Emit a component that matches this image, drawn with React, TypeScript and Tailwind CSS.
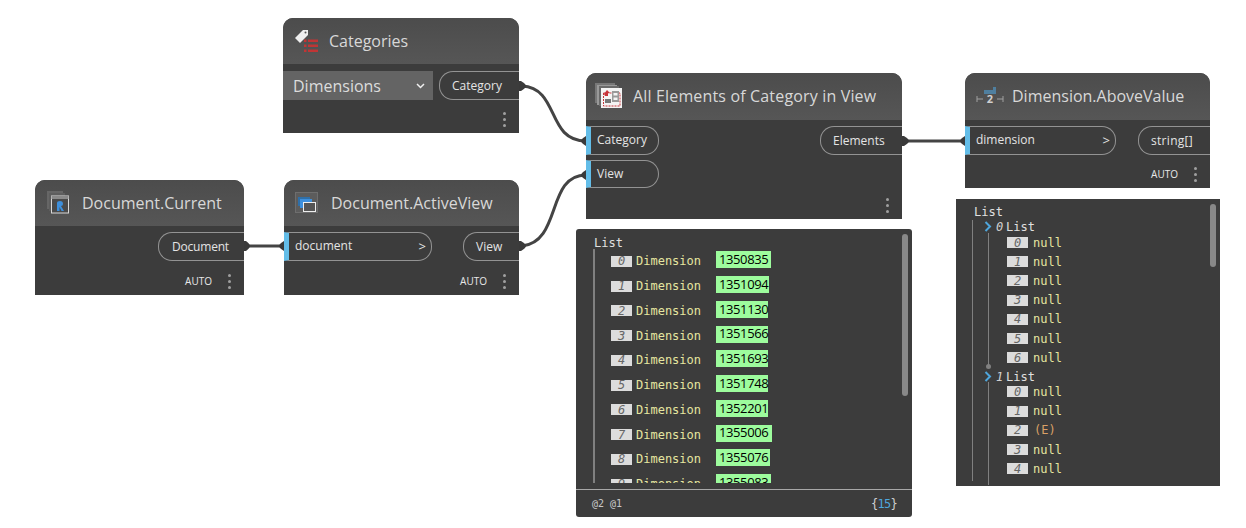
import React from 'react';

const SANS = "font-['Open_Sans',sans-serif]";
const MONO = "font-['DejaVu_Sans_Mono',monospace]";

const Dots = () => (
  <div className="flex flex-col gap-[3px] w-[3px]">
    <span className="w-[3px] h-[3px] rounded-full bg-[#a0a0a0]" />
    <span className="w-[3px] h-[3px] rounded-full bg-[#a0a0a0]" />
    <span className="w-[3px] h-[3px] rounded-full bg-[#a0a0a0]" />
  </div>
);

const Footer = ({ auto }: { auto?: boolean }) => (
  <div className="mt-auto flex items-center justify-end h-[27px] pr-[13px] gap-[16px]">
    {auto && <span className={`${SANS} text-[10px] font-medium text-[#e8e8e8]`}>AUTO</span>}
    <Dots />
  </div>
);

const Header = ({ icon, title, className }: { icon: React.ReactNode; title: string; className: string }) => (
  <div className={`flex items-center bg-gradient-to-b from-[#4c4c4c] to-[#565656] rounded-t-[10px] ${className}`}>
    {icon}
    <span className={`${SANS} text-[16px] text-[#d8d8d8] whitespace-nowrap`}>{title}</span>
  </div>
);

const Output = ({ label, className }: { label: string; className: string }) => (
  <div className={`flex items-center h-[29px] border border-r-0 border-[#939393] rounded-l-[14px] ${className}`}>
    <span className={`${SANS} text-[12px] text-[#e4e4e4]`}>{label}</span>
  </div>
);

const Input = ({ label, arrow, className }: { label: string; arrow?: boolean; className: string }) => (
  <div className={`flex items-center justify-between border border-l-0 border-[#939393] rounded-r-[14px] border-l-[5px] border-l-[#63bde8] pl-[6px] pr-[5px] ${className}`}>
    <span className={`${SANS} text-[12px] text-[#e4e4e4] -mt-[1px]`}>{label}</span>
    {arrow && <span className={`${SANS} text-[13px] text-[#e4e4e4]`}>&gt;</span>}
  </div>
);

const CategoriesIcon = () => (
  <svg width="26" height="24" viewBox="0 0 26 24" className="ml-[11px] mr-[9px]">
    <path d="M1 9 L9 1 L14 1 L14 6 L6 14 Z" fill="#eeeeee" />
    <circle cx="11.5" cy="3.5" r="1" fill="#555" />
    <g fill="#c03535">
      <rect x="10" y="10.5" width="2.5" height="2.5" />
      <rect x="10" y="15.5" width="2.5" height="2.5" />
      <rect x="10" y="20.5" width="2.5" height="2.5" />
      <rect x="14" y="10.5" width="10" height="2.5" />
      <rect x="14" y="15.5" width="10" height="2.5" />
      <rect x="14" y="20.5" width="10" height="2.5" />
    </g>
  </svg>
);

const CurrentIcon = () => (
  <svg width="24" height="24" viewBox="0 0 24 24" className="ml-[11px] mr-[12px]">
    <rect x="1" y="0" width="16" height="18" fill="#666666" />
    <rect x="3" y="2" width="16" height="18" fill="#5e5e5e" />
    <rect x="5.5" y="5" width="17" height="17" fill="#4a4a4a" stroke="#d8d8d8" />
    <rect x="5.5" y="5" width="17" height="3" fill="#8a8a8a" />
    <path d="M11 20 V12 Q11 10 14 10 Q17 10 17 13 Q17 15 15 15 L18 20 H15.5 L13.5 16 V20 Z" fill="#3d8fdc" />
  </svg>
);

const ActiveViewIcon = () => (
  <svg width="24" height="22" viewBox="0 0 24 22" className="ml-[11px] mr-[12px]">
    <rect x="0.5" y="0.5" width="22" height="20" fill="#5c5c5c" stroke="#6e6e6e" />
    <rect x="3" y="5" width="12" height="9" fill="#2f6fa8" />
    <rect x="5" y="7" width="12" height="9" fill="#3d8fdc" />
    <rect x="8.5" y="10.5" width="12" height="9" fill="#555555" stroke="#eeeeee" />
  </svg>
);

const AllElementsIcon = () => (
  <svg width="28" height="26" viewBox="0 0 28 26" className="ml-[9px] mr-[10px]">
    <rect x="0" y="0" width="20" height="20" fill="#777777" />
    <rect x="2" y="2" width="20" height="20" fill="#999999" />
    <rect x="4" y="3" width="20" height="20" fill="#6a6a6a" />
    <rect x="6" y="5" width="21" height="20" fill="#f4f4f4" />
    <rect x="8.5" y="10" width="16.5" height="13" fill="none" stroke="#c8343a" strokeDasharray="2 1" />
    <path d="M9 11 L12 7 L15 10 L13 10 L13 13 L10 13 Z" fill="#c8343a" />
    <rect x="17" y="8" width="7" height="11" fill="#9a9a9a" />
    <rect x="18.5" y="10" width="4" height="2.5" fill="#f4f4f4" />
    <rect x="18.5" y="14.5" width="4" height="2.5" fill="#f4f4f4" />
    <rect x="10" y="16" width="6" height="4" fill="#777777" />
  </svg>
);

const DimensionIcon = () => (
  <svg width="28" height="20" viewBox="0 0 28 20" className="ml-[11px] mr-[8px]">
    <path d="M1 10 V16 M1 13 H7 M21 13 H27 M27 10 V16" stroke="#a0a0a0" fill="none" />
    <path d="M8 4 H17 V1 H20 V8 H8 Z" fill="#4f7f9f" />
    <text x="14" y="17" textAnchor="middle" fontSize="11" fontWeight="700" fill="#d0d0d0" fontFamily="Open Sans">2</text>
  </svg>
);

const Wires = () => (
  <svg width="1246" height="528" viewBox="0 0 1246 528" className="absolute left-0 top-0">
    <g fill="none" stroke="#444444" strokeWidth="3">
      <path d="M522 86 C 560 88, 546 141, 586 141" />
      <path d="M522 246 C 562 242, 546 175, 586 175" />
      <path d="M247 246 H 284" />
      <path d="M905 141 H 965" />
    </g>
    <g fill="#3a3a3a">
      <path d="M519 81 H521 Q526 84 526 86 Q526 88 521 91 H519 Z" />
      <path d="M519 241 H521 Q526 244 526 246 Q526 248 521 251 H519 Z" />
      <path d="M244 241 H246 Q250 244 250 246 Q250 248 246 251 H244 Z" />
      <path d="M902 136 H904 Q909 139 909 141 Q909 143 904 146 H902 Z" />
      <path d="M586 136 V146 Q581 143 581 141 Q581 139 586 136 Z" />
      <path d="M586 170 V180 Q581 177 581 175 Q581 173 586 170 Z" />
      <path d="M284 241 V251 Q279 248 279 246 Q279 244 284 241 Z" />
      <path d="M965 136 V146 Q960 143 960 141 Q960 139 965 136 Z" />
    </g>
  </svg>
);

const Tag = ({ n }: { n: number }) => (
  <span className={`${MONO} flex items-center justify-center w-[21px] h-[11px] bg-[#dcdcdc] text-[12px] italic text-[#666666] shrink-0`}>{n}</span>
);

const dims: [number, string][] = [
  [1350835, 'w-[55px]'],
  [1351094, 'w-[53px]'],
  [1351130, 'w-[52px]'],
  [1351566, 'w-[52px]'],
  [1351693, 'w-[52px]'],
  [1351748, 'w-[52px]'],
  [1352201, 'w-[52px]'],
  [1355006, 'w-[56px]'],
  [1355076, 'w-[54px]'],
  [1355083, 'w-[55px]'],
];

const Scrollbar = ({ className }: { className: string }) => (
  <div className={`absolute w-[6px] rounded-[3px] bg-[#888888] ${className}`} />
);

const NullRow = ({ n, e }: { n: number; e?: boolean }) => (
  <div className="flex items-center h-[19.2px] pl-[18px] gap-[5px]">
    <Tag n={n} />
    <span className={`${MONO} text-[12px] ${e ? 'text-[#d9a066] pl-[1px]' : 'text-[#e6e6a0]'}`}>{e ? '(E)' : 'null'}</span>
  </div>
);

const ListHead = ({ n }: { n: number }) => (
  <div className="flex items-center h-[13px] mt-[1px] -ml-[4px]">
    <svg width="8" height="11" viewBox="0 0 8 11" className="mr-[4px] shrink-0">
      <path d="M1.5 1 L6 5.5 L1.5 10" fill="none" stroke="#4ea6dc" strokeWidth="2" />
    </svg>
    <span className={`${MONO} text-[12px] italic text-[#d0d0d0] w-[10px]`}>{n}</span>
    <span className={`${MONO} text-[12px] text-[#e0e0e0]`}>List</span>
  </div>
);

export default function App() {
  return (
    <div className="relative w-[1246px] h-[528px] bg-white overflow-hidden">
      <Wires />

      <div className="absolute left-[283px] top-[18px] w-[236px] h-[115px] flex flex-col bg-[#3c3c3c] rounded-t-[10px]">
        <Header icon={<CategoriesIcon />} title="Categories" className="h-[46px]" />
        <div className="flex mt-[7px] items-start">
          <div className="flex items-center justify-between w-[150px] h-[29px] pl-[10px] pr-[8px] bg-[#646464]">
            <span className={`${SANS} text-[16px] text-[#dcdcdc]`}>Dimensions</span>
            <svg width="9" height="6" viewBox="0 0 9 6"><path d="M1 1 L4.5 4.5 L8 1" fill="none" stroke="#f0f0f0" strokeWidth="1.5" /></svg>
          </div>
          <Output label="Category" className="ml-[6px] w-[80px] pl-[12px]" />
        </div>
        <Footer />
      </div>

      <div className="absolute left-[35px] top-[180px] w-[209px] h-[115px] flex flex-col bg-[#3c3c3c] rounded-t-[10px]">
        <Header icon={<CurrentIcon />} title="Document.Current" className="h-[46px]" />
        <div className="flex justify-end mt-[6px]">
          <Output label="Document" className="w-[86px] pl-[13px] tracking-[-0.2px]" />
        </div>
        <Footer auto />
      </div>

      <div className="absolute left-[284px] top-[180px] w-[235px] h-[115px] flex flex-col bg-[#3c3c3c] rounded-t-[10px]">
        <Header icon={<ActiveViewIcon />} title="Document.ActiveView" className="h-[46px]" />
        <div className="flex justify-between mt-[6px]">
          <Input label="document" arrow className="w-[148px] h-[29px]" />
          <Output label="View" className="w-[56px] pl-[12px]" />
        </div>
        <Footer auto />
      </div>

      <div className="absolute left-[586px] top-[73px] w-[316px] h-[146px] flex flex-col bg-[#3c3c3c] rounded-t-[10px]">
        <Header icon={<AllElementsIcon />} title="All Elements of Category in View" className="h-[47px] pb-[1px] tracking-[0.16px]" />
        <div className="flex justify-between mt-[6px]">
          <div className="flex flex-col gap-[5px]">
            <Input label="Category" className="w-[73px] h-[29px]" />
            <Input label="View" className="w-[73px] h-[28px]" />
          </div>
          <Output label="Elements" className="w-[82px] pl-[12px]" />
        </div>
        <Footer />
      </div>

      <div className="absolute left-[965px] top-[73px] w-[245px] h-[115px] flex flex-col bg-[#3c3c3c] rounded-t-[10px]">
        <Header icon={<DimensionIcon />} title="Dimension.AboveValue" className="h-[47px] pb-[1px]" />
        <div className="flex justify-between mt-[6px]">
          <Input label="dimension" arrow className="w-[151px] h-[29px]" />
          <Output label="string[]" className="w-[72px] pl-[12px] tracking-[0.3px]" />
        </div>
        <Footer auto />
      </div>

      <div className="absolute left-[576px] top-[229px] w-[336px] h-[288px] flex flex-col bg-[#3c3c3c] rounded-[3px]">
        <Scrollbar className="left-[326px] top-[5px] h-[162px]" />
        <div className="h-[260px] overflow-hidden pl-[18px] pt-[7px]">
          <div className={`${MONO} text-[12px] leading-[14px] text-[#e0e0e0]`}>List</div>
          <div className="border-l-2 border-[#808080] -ml-[1px] pl-[16px] -mt-[1px] h-[234px] overflow-hidden">
            {dims.map(([value, width], i) => (
              <div key={value} className="flex items-center h-[24.75px]">
                <Tag n={i} />
                <span className={`${MONO} text-[12px] text-[#e6e6a0] ml-[4px] w-[80px]`}>Dimension</span>
                <span className={`${SANS} flex items-center pl-[3px] h-[17px] -mt-[3px] bg-[#9dfc9d] text-[13px] tracking-[-0.4px] text-black ${width}`}>{value}</span>
              </div>
            ))}
          </div>
        </div>
        <div className={`${MONO} flex items-center justify-between h-[28px] border-t border-[#a8a8a8] pl-[16px] pr-[15px]`}>
          <span className="text-[10px] text-[#c8c8c8]">@2 @1</span>
          <span className="text-[12px] tracking-[-0.7px] text-[#d0d0d0]">{'{'}<span className="text-[#4ea6dc]">15</span>{'}'}</span>
        </div>
      </div>

      <div className="absolute left-[956px] top-[199px] w-[264px] h-[287px] bg-[#3c3c3c] pl-[16px] pt-[6px] overflow-hidden">
        <Scrollbar className="left-[254px] top-[5px] h-[63px]" />
        <div className={`${MONO} text-[12px] leading-[14px] text-[#e0e0e0] ml-[2px]`}>List</div>
        <div className="border-l border-[#808080] pl-[15px] h-[261px]">
          <ListHead n={0} />
          <div className="relative border-l border-[#808080] h-[134px] mb-[3.4px]">
            {[0, 1, 2, 3, 4, 5, 6].map(n => <NullRow key={n} n={n} />)}
            <span className="absolute -left-[3px] -bottom-[2px] w-[5px] h-[5px] rounded-full bg-[#808080]" />
          </div>
          <ListHead n={1} />
          <div className="border-l border-[#808080] -mt-[1px] h-[103px]">
            <NullRow n={0} />
            <NullRow n={1} />
            <NullRow n={2} e />
            <NullRow n={3} />
            <NullRow n={4} />
          </div>
        </div>
      </div>
    </div>
  );
}
